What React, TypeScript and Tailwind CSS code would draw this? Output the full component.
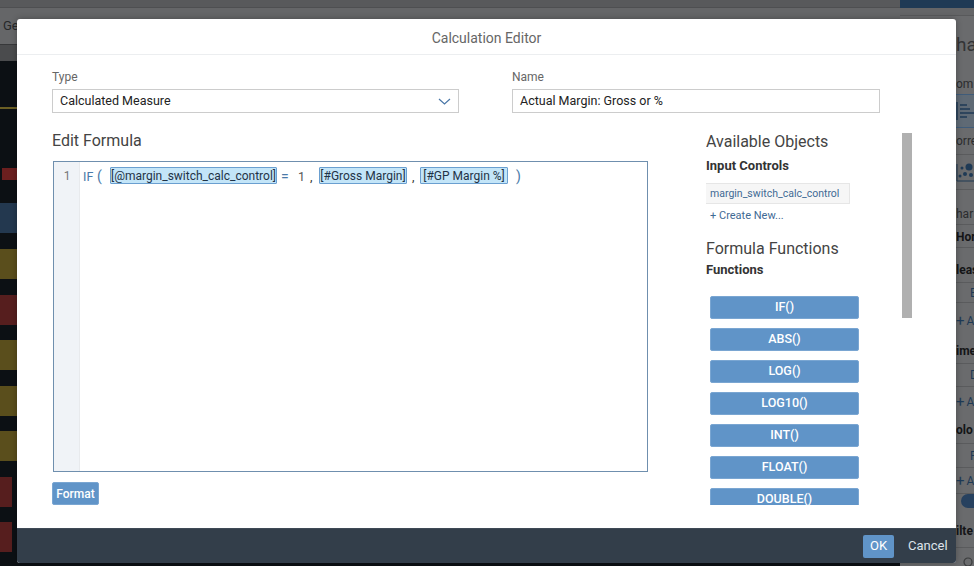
const functions = ["IF()", "ABS()", "LOG()", "LOG10()", "INT()", "FLOAT()", "DOUBLE()"];

function Token({ className, children }: { className: string; children: string }) {
  return (
    <span className={`h-[17px] shrink-0 flex items-center justify-center pt-[1px] bg-[#c3e5f8] border border-[#6a9fd0] rounded-[1px] text-[12px] text-[#1f3347] whitespace-nowrap ${className}`}>
      {children}
    </span>
  );
}

function SideRow({ className, children }: { className: string; children?: React.ReactNode }) {
  return <div className={`shrink-0 flex items-center whitespace-nowrap overflow-hidden ${className}`}>{children}</div>;
}

function AddRow({ className }: { className: string }) {
  return (
    <SideRow className={`pl-[56px] text-[#1f3a55] ${className}`}>
      <span className="mr-[2px] text-[15px]">+</span>A
    </SideRow>
  );
}

function LeftBackdrop() {
  return (
    <div className="w-[900px] shrink-0 flex flex-col">
      <div className="h-[8px] bg-[#58595b] border-b border-[#4e4f51]" />
      <div className="h-[37px] bg-[#656668] border-b border-[#37383a] pl-[3px] flex items-center text-[13px] text-[#26282a]">Ge</div>
      <div className="h-[16px] bg-[#4a4b4d]" />
      <div className="flex-1 bg-[#0c1014] flex flex-col">
        <div className="mt-[46px] h-[2px] bg-[#6b5f24]" />
        <div className="mt-[59px] ml-[2px] w-[15px] h-[12px] bg-[#6b1f1f]" />
        <div className="mt-[23px] w-[17px] h-[30px] bg-[#23384f]" />
        <div className="mt-[16px] w-[17px] h-[30px] bg-[#5a4e1c]" />
        <div className="mt-[16px] w-[17px] h-[30px] bg-[#561e1e]" />
        <div className="mt-[15px] w-[17px] h-[30px] bg-[#5a4e1c]" />
        <div className="mt-[16px] w-[17px] h-[30px] bg-[#5a4e1c]" />
        <div className="mt-[15px] w-[17px] h-[30px] bg-[#5a4e1c]" />
        <div className="mt-[16px] w-[12px] h-[30px] bg-[#561e1e]" />
        <div className="mt-[15px] w-[12px] h-[30px] bg-[#561e1e]" />
      </div>
    </div>
  );
}

function RightBackdrop() {
  const line = "border-b border-[#5a5b5d]";
  return (
    <div className="flex-1 flex flex-col bg-[#6a6b6d] text-[#2b2c2e] text-[12px] overflow-hidden">
      <div className="h-[8px] shrink-0 bg-[#1f3a55]" />
      <div className="h-[8px] shrink-0 bg-[#646567] border-b border-[#58595b]" />
      <SideRow className="h-[58px] pl-[56px] text-[19px] text-[#333436]">ha</SideRow>
      <SideRow className="h-[20px] pl-[56px]">om</SideRow>
      <SideRow className="h-[34px] pl-[56px] bg-[#5f6a75] border-y border-[#3f5c7a]">
        <svg width="18" height="26" viewBox="0 0 18 26" fill="none" stroke="#1f3a55" strokeWidth="1.5" className="shrink-0">
          <path d="M1 4v18M4 7h7M4 11h10M4 15h14M4 19h7" />
        </svg>
      </SideRow>
      <SideRow className={`h-[27px] pl-[56px] ${line}`}>orre</SideRow>
      <SideRow className={`h-[35px] pl-[56px] ${line}`}>
        <svg width="18" height="22" viewBox="0 0 18 22" fill="#1f3a55" className="shrink-0">
          <path d="M1 3v17h17" fill="none" stroke="#1f3a55" strokeWidth="1" />
          <circle cx="13" cy="6" r="3.5" />
          <circle cx="6" cy="7" r="1.5" />
          <circle cx="9" cy="13" r="2" />
          <circle cx="4" cy="15" r="1.5" />
          <circle cx="15" cy="14" r="2" />
        </svg>
      </SideRow>
      <SideRow className={`h-[35px] pl-[56px] pt-[13px] ${line}`}>har</SideRow>
      <SideRow className={`h-[23px] pl-[56px] pt-[2px] font-bold text-[#141517] ${line}`}>Hor</SideRow>
      <SideRow className={`h-[35px] pl-[56px] pt-[10px] font-bold text-[#141517] ${line}`}>leas</SideRow>
      <SideRow className={`h-[20px] pl-[70px] text-[#1f3a55] ${line}`}>B</SideRow>
      <AddRow className="h-[36px]" />
      <SideRow className={`h-[25px] pl-[56px] font-bold text-[#141517] ${line}`}>ime</SideRow>
      <SideRow className={`h-[23px] pl-[70px] text-[#1f3a55] ${line}`}>D</SideRow>
      <AddRow className="h-[30px]" />
      <SideRow className={`h-[27px] pl-[56px] font-bold text-[#141517] ${line}`}>olo</SideRow>
      <SideRow className={`h-[24px] pl-[70px] text-[#1f3a55] ${line}`}>F</SideRow>
      <AddRow className={`h-[26px] pt-[1px] ${line}`} />
      <SideRow className="h-[14px] pl-[61px]">
        <span className="w-[13px] h-[14px] shrink-0 rounded-l-full bg-[#27415f]" />
      </SideRow>
      <SideRow className={`h-[40px] pl-[56px] pt-[6px] font-bold text-[#141517] ${line}`}>ilte</SideRow>
      <SideRow className="flex-1 pl-[62px] pt-[10px]">
        <svg width="12" height="12" viewBox="0 0 12 12" fill="none" stroke="#3a3b3d" strokeWidth="1.2" className="shrink-0">
          <circle cx="6" cy="6" r="4" />
        </svg>
      </SideRow>
    </div>
  );
}

export default function App() {
  return (
    <div className="relative w-[974px] h-[566px] overflow-hidden flex font-['Roboto',Arial,sans-serif]">
      <LeftBackdrop />
      <RightBackdrop />

      <div className="absolute left-[17px] top-[19px] w-[939px] h-[544px] rounded-[3px] overflow-hidden flex flex-col bg-white shadow-[0_0_6px_rgba(0,0,0,0.3)]">
        <div className="h-[36px] shrink-0 border-b border-[#eceef0] flex items-center justify-center text-[14px] text-[#666] pt-[3px]">
          Calculation Editor
        </div>

        <div className="flex-1 min-h-0 pl-[35px] flex flex-col">
          <div className="flex gap-[53px] pt-[14px]">
            <div className="w-[407px]">
              <div className="text-[12px] text-[#666] leading-[16px]">Type</div>
              <div className="mt-[4px] h-[24px] border border-[#ccc] flex items-center justify-between px-[7px] text-[12.5px] text-[#222]">
                <span>Calculated Measure</span>
                <svg width="13" height="7" viewBox="0 0 13 7" fill="none" stroke="#4a77a8" strokeWidth="1.2">
                  <path d="M1 1l5.5 5L12 1" />
                </svg>
              </div>
            </div>
            <div className="w-[368px]">
              <div className="text-[12px] text-[#666] leading-[16px]">Name</div>
              <div className="mt-[4px] h-[24px] border border-[#ccc] flex items-center pl-[7px] text-[12.5px] text-[#222]">
                Actual Margin: Gross or %
              </div>
            </div>
          </div>

          <div className="flex mt-[18px] flex-1 min-h-0">
            <div className="w-[654px] shrink-0 flex flex-col">
              <div className="text-[16px] text-[#444] leading-[20px]">Edit Formula</div>
              <div className="mt-[10px] ml-[1px] w-[595px] h-[311px] border border-[#6f8fae] flex">
                <div className="w-[26px] shrink-0 bg-[#f0f3f7] border-r border-[#e8eaed] text-center text-[12px] text-[#777] pt-[5px] leading-[19px] pl-[1px]">1</div>
                <div className="flex-1 flex items-start pt-[5px] pl-[3px] text-[12.5px] leading-[19px] text-[#333]">
                  <span className="text-[#4a7aa8] w-[14px] shrink-0">IF</span>
                  <span className="text-[#4a7aa8] w-[13px] shrink-0 text-[14px]">(</span>
                  <Token className="w-[167px]">[@margin_switch_calc_control]</Token>
                  <span className="ml-[4px] w-[17px] shrink-0 text-[#4a7aa8] text-[14px]">=</span>
                  <span className="w-[12px] shrink-0 text-[#555]">1</span>
                  <span className="w-[9px] shrink-0">,</span>
                  <Token className="w-[88px]">[#Gross Margin]</Token>
                  <span className="w-[13px] pl-[5px] shrink-0">,</span>
                  <Token className="w-[88px]">[#GP Margin %]</Token>
                  <span className="ml-[8px] text-[#4a7aa8] text-[14px]">)</span>
                </div>
              </div>
              <button className="mt-[10px] w-[47px] h-[23px] bg-[#6094c8] border border-[#7aa6d2] rounded-[2px] text-white text-[12px] font-medium self-start">
                Format
              </button>
            </div>

            <div className="w-[196px] shrink-0 h-[374px] overflow-hidden pt-[1px]">
              <div className="text-[16px] text-[#444] leading-[20px]">Available Objects</div>
              <div className="text-[13px] font-bold text-[#333] mt-[6px] leading-[16px]">Input Controls</div>
              <div className="mt-[9px] -ml-[4px] w-[148px] h-[21px] bg-[#f6f6f6] border border-[#e6e6e6] flex items-center pl-[7px] text-[10.5px] text-[#3f6a94]">
                margin_switch_calc_control
              </div>
              <div className="mt-[5px] pl-[4px] text-[11px] leading-[14px] text-[#3f6a94]">+ Create New...</div>
              <div className="text-[16px] text-[#444] leading-[20px] mt-[16px]">Formula Functions</div>
              <div className="text-[13px] font-bold text-[#333] leading-[16px] mt-[3px]">Functions</div>
              <div className="mt-[18px] ml-[4px] w-[149px] flex flex-col gap-[9px]">
                {functions.map((f) => (
                  <button key={f} className="h-[23px] shrink-0 bg-[#6094c8] border border-[#7aa6d2] rounded-[2px] text-white text-[12.5px] font-medium">
                    {f}
                  </button>
                ))}
              </div>
            </div>
            <div className="mt-[2px] w-[10px] h-[185px] shrink-0 bg-[#b0b0b0]" />
          </div>
        </div>

        <div className="h-[35px] shrink-0 bg-[#333e4a] border-t border-[#3f4a56] flex items-center justify-end pr-[10px] text-[13px]">
          <button className="w-[31px] h-[23px] bg-[#6094c8] rounded-[2px] text-white">OK</button>
          <button className="ml-[14px] w-[38px] text-left text-[#dde3ea]">Cancel</button>
        </div>
      </div>
    </div>
  );
}
